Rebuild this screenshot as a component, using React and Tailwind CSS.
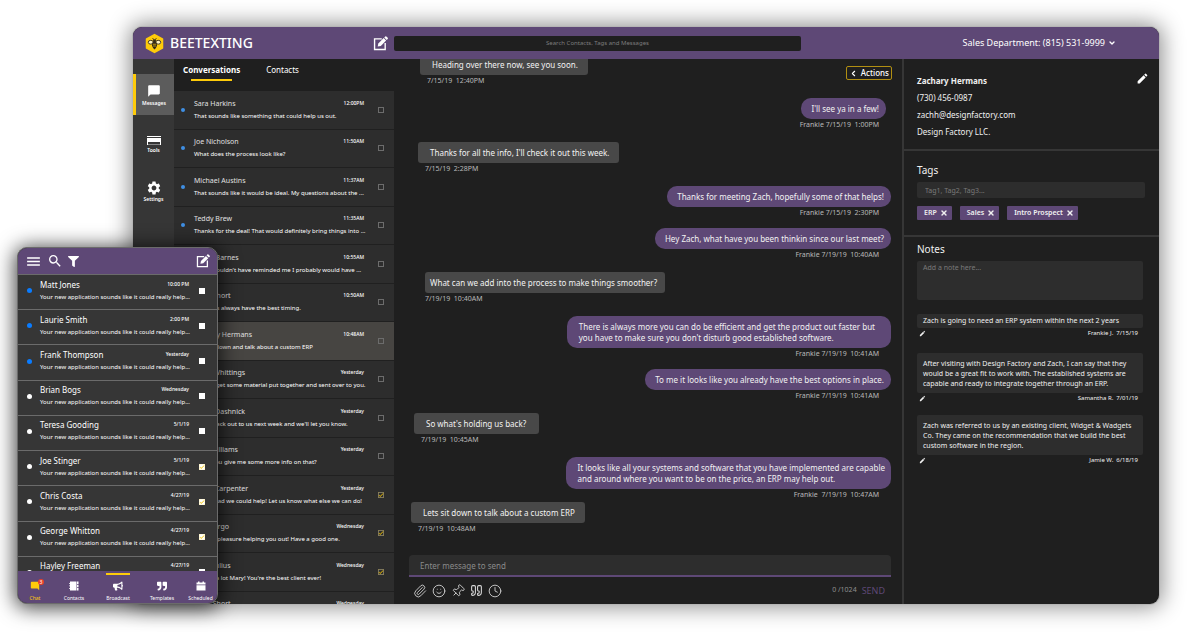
import React, { useState } from "react";
import { Paperclip, Smile, Quote, Clock, Pin, ChevronLeft, ChevronDown, X } from "lucide-react";
import { MdChatBubble, MdSettings, MdMenu, MdSearch, MdEdit, MdCheck } from "react-icons/md";
import { FaFilter, FaBullhorn, FaQuoteRight } from "react-icons/fa";

const conversations = [
  { name: "Sara Harkins", time: "12:00PM", text: "That sounds like something that could help us out.", unread: true },
  { name: "Joe Nicholson", time: "11:50AM", text: "What does the process look like?", unread: true },
  { name: "Michael Austins", time: "11:37AM", text: "That sounds like it would be ideal. My questions about the ...", unread: true },
  { name: "Teddy Brew", time: "11:35AM", text: "Thanks for the deal! That would definitely bring things into ...", unread: true },
  { name: "Susan Barnes", time: "10:55AM", text: "If you wouldn't have reminded me I probably would have ..." },
  { name: "Mark Short", time: "10:50AM", text: "You guys always have the best timing." },
  { name: "Zachary Hermans", time: "10:48AM", text: "Lets sit down and talk about a custom ERP", active: true },
  { name: "Jason Whittings", time: "Yesterday", text: "We can get some material put together and sent over to you." },
  { name: "Karen Dashnick", time: "Yesterday", text: "Reach back out to us next week and we'll let you know." },
  { name: "Jenn Williams", time: "Yesterday", text: "Could you give me some more info on that?" },
  { name: "Diana Carpenter", time: "Yesterday", text: "I'm so glad we could help! Let us know what else we can do!", done: true },
  { name: "Tom Fargo", time: "Wednesday", text: "It was a pleasure helping you out! Have a good one.", done: true },
  { name: "Carol Julius", time: "Wednesday", text: "Thanks a lot Mary! You're the best client ever!", done: true },
  { name: "Mark Short", time: "Wednesday", text: "" },
];

const mobileConversations = [
  { name: "Matt Jones", time: "10:00 PM", unread: true },
  { name: "Laurie Smith", time: "2:00 PM", unread: true },
  { name: "Frank Thompson", time: "Yesterday", unread: true },
  { name: "Brian Bogs", time: "Wednesday" },
  { name: "Teresa Gooding", time: "5/1/19" },
  { name: "Joe Stinger", time: "5/1/19", done: true },
  { name: "Chris Costa", time: "4/27/19", done: true },
  { name: "George Whitton", time: "4/27/19", done: true },
  { name: "Hayley Freeman", time: "4/27/19" },
];

const messages = [
  { text: "Heading over there now, see you soon.", meta: "7/15/19  12:40PM", place: "ml-[11px]" },
  { mine: true, text: "I'll see ya in a few!", meta: "Frankie 7/15/19  1:00PM", place: "mt-3 mr-[5px]", metaPad: "pr-[7px]" },
  { text: "Thanks for all the info, I'll check it out this week.", meta: "7/15/19  2:28PM", place: "mt-3 ml-[9px]" },
  { mine: true, text: "Thanks for meeting Zach, hopefully some of that helps!", meta: "Frankie 7/15/19  2:30PM", place: "mt-3" },
  { mine: true, text: "Hey Zach, what have you been thinkin since our last meet?", meta: "Frankie 7/19/19  10:40AM", place: "mt-2.5" },
  { text: "What can we add into the process to make things smoother?", meta: "7/19/19  10:40AM", place: "mt-3 ml-4", pad: "pl-[5px] pr-[8px]", metaPad: "pl-0" },
  { mine: true, text: "There is always more you can do be efficient and get the product out faster but\nyou have to make sure you don't disturb good established software.", meta: "Frankie 7/19/19  10:41AM", place: "mt-3", pad: "pl-3 pr-4" },
  { mine: true, text: "To me it looks like you already have the best options in place.", meta: "Frankie 7/19/19  10:41AM", place: "mt-2.5" },
  { text: "So what's holding us back?", meta: "7/19/19  10:45AM", place: "mt-3 ml-[5px]", pad: "pl-3 pr-[13px]" },
  { mine: true, text: "It looks like all your systems and software that you have implemented are capable\nand around where you want to be on the price, an ERP may help out.", meta: "Frankie  7/19/19  10:47AM", place: "mt-3", pad: "pl-3 pr-[6px]" },
  { text: "Lets sit down to talk about a custom ERP", meta: "7/19/19  10:48AM", place: "mt-0.5 ml-[2px]" },
];

const notes = [
  { text: "Zach is going to need an ERP system within the next 2 years", meta: "Frankie J.  7/15/19", place: "mt-[14px]", pad: "py-[2px]" },
  { text: "After visiting with Design Factory and Zach, I can say that they would be a great fit to work with. The established systems are capable and ready to integrate together through an ERP.", meta: "Samantha R.  7/01/19", place: "mt-[14px]", pad: "pt-[6px] pb-1" },
  { text: "Zach was referred to us by an existing client, Widget & Wadgets Co. They came on the recommendation that we build the best custom software in the region.", meta: "Jamie W.  6/18/19", place: "mt-[11px]", pad: "pt-[6px] pb-1" },
];

const ComposeIcon = ({ className }) => (
  <svg viewBox="0 0 24 24" fill="none" className={className}>
    <path d="M14 4.5H2.5v17h17V11" stroke="currentColor" strokeWidth="2.2" />
    <path d="M7.5 16.8l1-5L17 3.300l4 4-8.500 8.500z" fill="currentColor" />
    <path d="M18 2.300L19.600.7a1.200 1.200 0 0 1 1.700 0l2.200 2.200a1.200 1.200 0 0 1 0 1.700L22 6.200z" fill="currentColor" />
  </svg>
);

const BeeLogo = ({ className }) => (
  <svg viewBox="0 0 38 42" className={className}>
    <path d="M19 1.500L35.500 10.500a2 2 0 0 1 1 1.700v17.600a2 2 0 0 1-1 1.700L19 40.500 2.500 31.500a2 2 0 0 1-1-1.700V12.200a2 2 0 0 1 1-1.700z" fill="#fecb0a" />
    <path d="M15 10l3 4M23 10l-3 4" stroke="#33291a" strokeWidth="1.500" />
    <ellipse cx="11.500" cy="18.500" rx="5" ry="3.800" fill="#fff3c0" stroke="#33291a" strokeWidth="1.800" />
    <ellipse cx="26.500" cy="18.500" rx="5" ry="3.800" fill="#fff3c0" stroke="#33291a" strokeWidth="1.800" />
    <circle cx="19" cy="15.500" r="3" fill="#33291a" />
    <path d="M19 17c4 0 5.500 4 5 7.500S21 31 19 33c-2-2-4.500-5-5-8.500S15 17 19 17z" fill="#33291a" />
    <path d="M15.500 22.500h7M15.800 26h6.400" stroke="#fecb0a" strokeWidth="1.300" />
  </svg>
);

const ToolsIcon = ({ className }) => (
  <svg viewBox="0 0 14 9" className={className}>
    <path d="M0 0h14v1H0zM0 2h14v4H0z" fill="currentColor" />
    <path d="M0 6h1v3H0zM13 6h1v3h-1z" fill="currentColor" />
    <path d="M1 8h12v1H1z" fill="currentColor" opacity="0.4" />
  </svg>
);

const BookIcon = ({ className }) => (
  <svg viewBox="0 0 20 20" fill="currentColor" className={className}>
    <path d="M2 1h13v18H2zM16 1h3v5h-3zM16 7.500h3v5h-3zM16 14h3v5h-3z" />
    <path d="M0 4h3v1.500H0zM0 9h3v1.500H0zM0 14h3v1.500H0z" />
  </svg>
);

const CalendarIcon = ({ className }) => (
  <svg viewBox="0 0 20 20" fill="currentColor" className={className}>
    <path d="M1 3h3V1h3v2h6V1h3v2h3v4H1zM1 8.500h18V19H1z" />
  </svg>
);

const Check = ({ checked, label, light }) => {
  const [on, setOn] = useState(!!checked);
  return (
    <span className="relative flex size-[6px] shrink-0">
      <input
        type="checkbox"
        aria-label={label}
        checked={on}
        onChange={() => setOn(!on)}
        className={light ? "size-[6px] appearance-none bg-white" : "size-[6px] appearance-none border border-[#6c6c6c]"}
      />
      {on && <MdCheck className="pointer-events-none absolute inset-0 size-[6px] stroke-1 text-[#f2c200]" />}
    </span>
  );
};

const TopBar = () => (
  <header className="flex h-8 shrink-0 items-center bg-[#5e4876] text-white">
    <div className="flex w-[261px] shrink-0 items-center justify-between pl-3 pr-[6px]">
      <div className="flex items-center gap-[6px]">
        <BeeLogo className="h-[21px] w-[19px]" />
        <span className="text-[14px] font-medium leading-4">BEETEXTING</span>
      </div>
      <button aria-label="New message">
        <ComposeIcon className="size-[15px]" />
      </button>
    </div>
    <input
      type="text"
      aria-label="Search"
      placeholder="Search Contacts, Tags and Messages"
      className="h-[15px] max-w-[407px] flex-1 rounded-xs bg-[#1f1f1f] text-center text-[6px] placeholder:text-[#7d7d7d]"
    />
    <button className="ml-auto mr-[43px] flex items-center gap-[3px] text-[9px] leading-3">
      Sales Department: (815) 531-9999
      <ChevronDown className="size-[8px]" strokeWidth={4} />
    </button>
  </header>
);

const SideNav = () => (
  <nav className="flex w-[41px] shrink-0 flex-col bg-[#363636] pt-[15px] text-[5px] font-semibold leading-[6px] text-white">
    <a href="#messages" className="flex h-[41px] flex-col items-center justify-center gap-[2px] border-l-[3px] border-[#fecb0a] bg-[#5c5c5c] pr-[2px]">
      <MdChatBubble className="size-[14px]" />
      Messages
    </a>
    <a href="#tools" className="mt-[21px] flex flex-col items-center gap-[2px]">
      <ToolsIcon className="h-[9px] w-[14px]" />
      Tools
    </a>
    <a href="#settings" className="mt-[27px] flex flex-col items-center">
      <MdSettings className="size-[16px]" />
      Settings
    </a>
  </nav>
);

const ConversationList = () => (
  <section className="flex w-[220px] shrink-0 flex-col overflow-hidden text-white">
    <div className="flex h-8 shrink-0 gap-[26px] pl-[9px] pt-[5px] text-[8px] leading-[11px]">
      <button className="flex flex-col items-center gap-1 self-start font-bold">
        Conversations
        <span className="h-[2px] w-[41px] bg-[#fecb0a]" />
      </button>
      <button className="self-start">Contacts</button>
    </div>
    <ul className="flex h-[539px] shrink-0 flex-col">
      {conversations.map((c, i) => (
        <li
          key={i}
          className={
            c.active
              ? "flex min-h-0 flex-1 items-center border-b border-[#202020] bg-[#474542] pl-[7px] pr-[10px]"
              : "flex min-h-0 flex-1 items-center border-b border-[#202020] bg-[#2d2d2d] pl-[7px] pr-[10px]"
          }
        >
          <span className={c.unread ? "size-1 shrink-0 rounded-full bg-[#3f8fe4]" : "size-1 shrink-0"} />
          <div className="ml-[9px] min-w-0 flex-1 pr-[14px]">
            <div className="flex justify-between">
              <span className="text-[7px] leading-3 text-[#e0e0e0]">{c.name}</span>
              <span className="text-[5px] font-medium leading-[10px]">{c.time}</span>
            </div>
            <p className="h-3 whitespace-nowrap text-[6px] leading-3">{c.text}</p>
          </div>
          <Check checked={c.done} label={`Select ${c.name}`} />
        </li>
      ))}
    </ul>
  </section>
);

const Message = ({ msg }) => {
  const pad = msg.pad || (msg.mine ? "pl-[10px] pr-[7px]" : "pl-3 pr-[10px]");
  const metaPad = msg.metaPad || (msg.mine ? "pr-3" : "pl-[7px]");
  return (
    <div className={`flex flex-col ${msg.mine ? "items-end" : "items-start"} ${msg.place}`}>
      <p
        className={`whitespace-pre py-[5px] text-[8px] leading-[11px] text-[#f2f2f2] ${
          msg.mine ? "rounded-[10px] bg-[#5e4876]" : "rounded-[3px] bg-[#484848]"
        } ${pad}`}
      >
        {msg.text}
      </p>
      <span className={`whitespace-pre text-[7px] leading-[11px] text-[#b9b9b9] ${metaPad}`}>{msg.meta}</span>
    </div>
  );
};

const Chat = () => (
  <main className="relative flex min-w-0 flex-1 flex-col pl-[15px] pr-[11px]">
    <div className="flex min-h-0 flex-1 flex-col justify-end overflow-hidden pb-[21px]">
      {messages.map((m, i) => (
        <Message key={i} msg={m} />
      ))}
    </div>
    <button className="absolute right-[10px] top-[7px] flex h-[14px] items-center gap-[3px] rounded-xs border border-[#b18f12] px-[2px] text-[8px] font-medium text-white">
      <ChevronLeft className="size-[9px]" strokeWidth={3} />
      Actions
    </button>
    <input
      type="text"
      aria-label="Message"
      placeholder="Enter message to send"
      className="h-[22px] shrink-0 rounded-t-[4px] border-b-2 border-[#5e4876] bg-[#2d2d2d] px-[11px] text-[8px] text-white placeholder:text-[#8a8a8a]"
    />
    <div className="flex h-[27px] shrink-0 items-center gap-[5px] pl-1 pr-[6px] text-[#d6d6d6]">
      <button aria-label="Attach file">
        <Paperclip className="size-[14px]" strokeWidth={1.5} />
      </button>
      <button aria-label="Emoji">
        <Smile className="size-[14px]" strokeWidth={1.5} />
      </button>
      <button aria-label="Pin">
        <Pin className="size-[14px] rotate-45" strokeWidth={1.5} />
      </button>
      <button aria-label="Template">
        <Quote className="size-[13px]" strokeWidth={2} />
      </button>
      <button aria-label="Schedule">
        <Clock className="size-[14px]" strokeWidth={1.5} />
      </button>
      <span className="ml-auto text-[7px] text-[#8f8f8f]">0 /1024</span>
      <button className="text-[9px] text-[#5e4876]">SEND</button>
    </div>
  </main>
);

const Details = () => (
  <aside className="flex w-[257px] shrink-0 flex-col border-l-2 border-[#363636] text-[#f0f0f0]">
    <section className="flex h-[92px] justify-between border-b-2 border-[#363636] pl-[13px] pr-[10px] pt-[13px] text-[8px] leading-[17px]">
      <div>
        <h2 className="font-bold">Zachary Hermans</h2>
        <p>(730) 456-0987</p>
        <p>zachh@designfactory.com</p>
        <p>Design Factory LLC.</p>
      </div>
      <button aria-label="Edit contact" className="self-start text-white">
        <MdEdit className="size-[13px]" />
      </button>
    </section>
    <section className="h-[86px] border-b-2 border-[#363636] pl-[13px] pr-[14px] pt-3">
      <label htmlFor="tags" className="block text-[10px] leading-[14px]">Tags</label>
      <input
        id="tags"
        placeholder="Tag1, Tag2, Tag3..."
        className="mt-[5px] block h-4 w-full rounded-xs bg-[#2d2d2d] px-2 text-[7px] placeholder:text-[#7a7a7a]"
      />
      <div className="mt-2 flex gap-2">
        {["ERP", "Sales", "Intro Prospect"].map((tag) => (
          <button key={tag} className="flex h-[14px] items-center gap-[3px] rounded-[1px] bg-[#5e4876] pl-[7px] pr-1 text-[7px] font-semibold">
            {tag}
            <X className="size-[8px]" strokeWidth={4} />
          </button>
        ))}
      </div>
    </section>
    <section className="pl-[13px] pr-4 pt-[5px]">
      <label htmlFor="note" className="block text-[10px] leading-[14px]">Notes</label>
      <textarea
        id="note"
        placeholder="Add a note here..."
        className="mt-[5px] block h-[39px] w-full resize-none rounded-xs bg-[#2d2d2d] px-[6px] py-[2px] text-[7px] leading-[10px] placeholder:text-[#7a7a7a]"
      />
      {notes.map((n) => (
        <div key={n.meta} className={n.place}>
          <p className={`rounded-xs bg-[#2d2d2d] px-[6px] text-[7px] leading-[10px] ${n.pad}`}>{n.text}</p>
          <div className="flex h-[11px] items-center justify-between pl-[2px] pr-[5px]">
            <button aria-label="Edit note">
              <MdEdit className="size-[7px]" />
            </button>
            <span className="whitespace-pre text-[6px] leading-[11px]">{n.meta}</span>
          </div>
        </div>
      ))}
    </section>
  </aside>
);

const Phone = () => (
  <div className="absolute bottom-10 left-[17px] flex h-[357px] w-[201px] flex-col overflow-hidden rounded-[10px] border border-[#6b6b6b] bg-[#363636] text-white shadow-[0_2px_20px_2px_rgba(0,0,0,0.75)]">
    <header className="flex h-[27px] shrink-0 items-center gap-[5px] border-b border-[#6b6b6b] bg-[#5e4876] px-[7px]">
      <button aria-label="Menu">
        <MdMenu className="size-[17px]" />
      </button>
      <button aria-label="Search">
        <MdSearch className="size-[16px]" />
      </button>
      <button aria-label="Filter">
        <FaFilter className="size-[11px]" />
      </button>
      <button aria-label="New message" className="ml-auto">
        <ComposeIcon className="size-[14px]" />
      </button>
    </header>
    <div className="min-h-0 flex-1 overflow-hidden">
      <ul className="flex h-[317px] flex-col">
        {mobileConversations.map((c) => (
          <li key={c.name} className="flex min-h-0 flex-1 items-center border-b border-[#6b6b6b] pb-[3px] pl-[9px] pr-3">
            <span className={c.unread ? "size-[5px] shrink-0 rounded-full bg-[#0a7cff]" : "size-[5px] shrink-0 rounded-full bg-white"} />
            <div className="ml-2 min-w-0 flex-1 pr-[10px]">
              <div className="flex justify-between">
                <span className="text-[8px] leading-3">{c.name}</span>
                <span className="text-[5px] font-medium leading-[10px]">{c.time}</span>
              </div>
              <p className="whitespace-nowrap text-[6px] leading-3">Your new application sounds like it could really help...</p>
            </div>
            <Check light checked={c.done} label={`Select ${c.name}`} />
          </li>
        ))}
      </ul>
    </div>
    <nav className="grid h-8 shrink-0 grid-cols-[34px_44px_44px_44px_33px] bg-[#5e4876] text-[5px] leading-[6px]">
      <a href="#chat" className="flex flex-col items-center gap-1 pt-[10px] text-[#fecb0a]">
        <span className="relative">
          <MdChatBubble className="size-[10px] -scale-x-100" />
          <span className="absolute -right-1 -top-[2px] flex size-[6px] items-center justify-center rounded-full bg-[#e8402a] text-[5px] leading-none text-white">3</span>
        </span>
        Chat
      </a>
      <a href="#contacts" className="flex flex-col items-center gap-1 pt-[10px]">
        <BookIcon className="size-[10px]" />
        Contacts
      </a>
      <a href="#broadcast" className="relative flex flex-col items-center gap-1 pt-[10px]">
        <span className="absolute top-[2px] h-[2px] w-6 bg-[#fecb0a]" />
        <FaBullhorn className="size-[10px]" />
        Broadcast
      </a>
      <a href="#templates" className="flex flex-col items-center gap-1 pt-[10px]">
        <FaQuoteRight className="size-[10px]" />
        Templates
      </a>
      <a href="#scheduled" className="flex flex-col items-center gap-1 pt-[10px]">
        <CalendarIcon className="size-[10px]" />
        Scheduled
      </a>
    </nav>
  </div>
);

export default function App() {
  return (
    <div className="relative flex h-screen bg-white pb-10 pl-[133px] pr-[41px] pt-[27px] font-['Noto_Sans',sans-serif]">
      <div className="flex min-w-0 flex-1 flex-col overflow-hidden rounded-[9px] bg-[#1f1f1f] shadow-[0_0_0_1px_#b5b5b5,0_0_22px_3px_rgba(0,0,0,0.45)]">
        <TopBar />
        <div className="flex min-h-0 flex-1">
          <SideNav />
          <ConversationList />
          <Chat />
          <Details />
        </div>
      </div>
      <Phone />
    </div>
  );
}
